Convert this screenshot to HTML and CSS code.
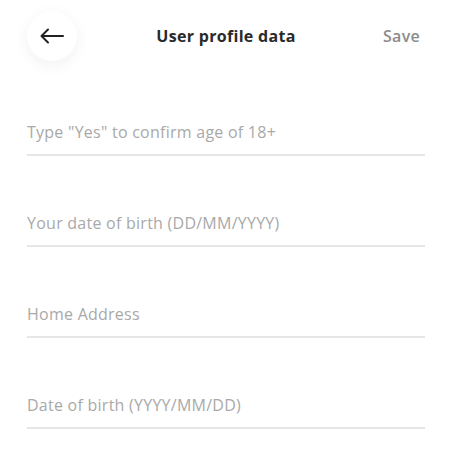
FILE: index.html
```html
<!DOCTYPE html>
<html lang="en">
<head>
    <meta charset="UTF-8">
    <meta name="viewport" content="width=device-width, initial-scale=1.0">
    <title>User profile data</title>
    <link rel="stylesheet" href="styles.css">
</head>
<body>
    <div class="header">
        <button class="back-btn" aria-label="Back">
            <svg width="24" height="16" viewBox="0 0 24 16" fill="none" stroke="#222" stroke-width="2" stroke-linecap="round" stroke-linejoin="round">
                <path d="M23 8H2"/>
                <path d="M8 1.5L1.5 8L8 14.5"/>
            </svg>
        </button>
        <h1 class="title">User profile data</h1>
        <button class="save-btn">Save</button>
    </div>

    <form class="profile-form">
        <div class="field">
            <input type="text" placeholder='Type "Yes" to confirm age of 18+'>
        </div>
        <div class="field">
            <input type="text" placeholder="Your date of birth (DD/MM/YYYY)">
        </div>
        <div class="field">
            <input type="text" placeholder="Home Address">
        </div>
        <div class="field">
            <input type="text" placeholder="Date of birth (YYYY/MM/DD)">
        </div>
    </form>
</body>
</html>
```

FILE: styles.css
```css
/* Global Styles */
* {
    box-sizing: border-box;
    margin: 0;
    padding: 0;
    font-family: "Open Sans", "Lato", sans-serif;
}
body {
    background: #fff;
    width: 452px;
}

/* Header */
.header {
    display: grid;
    grid-template-columns: 1fr auto 1fr;
    align-items: center;
    padding: 11px 32px 4px 27px;
}
.back-btn {
    width: 50px;
    height: 50px;
    border-radius: 50%;
    border: none;
    background: #fff;
    box-shadow: 0 4px 16px rgba(0, 0, 0, 0.06);
    display: flex;
    align-items: center;
    justify-content: center;
    cursor: pointer;
}
.title {
    font-size: 16px;
    font-weight: 700;
    letter-spacing: 0.3px;
    color: #2a2a2a;
    margin-left: 5px;
}
.save-btn {
    justify-self: end;
    border: none;
    background: none;
    font-size: 16px;
    font-weight: 600;
    letter-spacing: 0.3px;
    color: #8c8c8c;
    cursor: pointer;
}

/* Form fields */
.profile-form {
    padding: 0 27px;
}
.field {
    padding-top: 55px;
    padding-bottom: 10px;
    border-bottom: 2px solid #e6e6e6;
}
.field input {
    width: 100%;
    height: 24px;
    border: none;
    outline: none;
    font-size: 16px;
    letter-spacing: 0.25px;
    color: #333;
    background: transparent;
}
.field input::placeholder {
    color: #a9a9a9;
}
```
